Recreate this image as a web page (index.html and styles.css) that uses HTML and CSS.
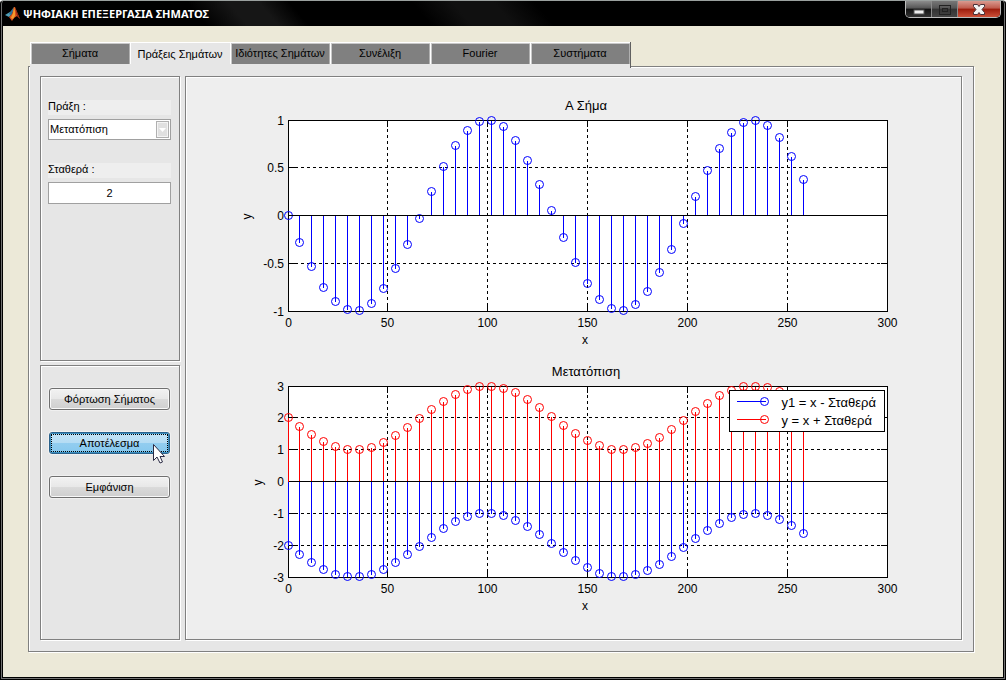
FILE: index.html
```html
<!DOCTYPE html>
<html lang="el">
<head>
<meta charset="utf-8">
<title>ΨΗΦΙΑΚΗ ΕΠΕΞΕΡΓΑΣΙΑ ΣΗΜΑΤΟΣ</title>
<link rel="stylesheet" href="styles.css">
</head>
<body>
<div class="window">
  <header class="titlebar">
    <svg class="logo" width="16" height="16" viewBox="0 0 16 16" aria-hidden="true">
      <path d="M0 9 L5 6 L7 8 L4 11 Z" fill="#4f9fb8"/>
      <path d="M5 6 L9 1 L8 6 L6 9 L4 8 Z" fill="#2c6f96"/>
      <path d="M9 1 L10 1 L12 6 L15 13 L12 10 L9 12 L7 15 L4 11 L7 8 Z" fill="#d9501c"/>
      <path d="M9 1 L10 5 L10 10 L8 13 L6 12 L8 7 Z" fill="#f59a2c"/>
      <path d="M10 2 L12 6 L15 13 L12 10 Z" fill="#8c2414"/>
    </svg>
    <h1 class="title">ΨΗΦΙΑΚΗ ΕΠΕΞΕΡΓΑΣΙΑ ΣΗΜΑΤΟΣ</h1>
    <div class="controls">
      <button class="control minimize" aria-label="Ελαχιστοποίηση"><svg width="12" height="14" viewBox="0 0 12 14"><rect x="1" y="8" width="10" height="4" fill="#eee" stroke="#555" stroke-width="1"/></svg></button>
      <button class="control maximize" aria-label="Μεγιστοποίηση" disabled><svg width="12" height="14" viewBox="0 0 12 14" fill="none" stroke="#222" stroke-width="1"><rect x="0.5" y="3.5" width="11" height="9"/><rect x="3.5" y="6.5" width="5" height="3"/></svg></button>
      <button class="control close" aria-label="Κλείσιμο"><svg width="14" height="14" viewBox="0 0 14 14"><path d="M1.500 2.500h4l1.500 2 1.500-2h4v2l-2.500 3 2.500 3v2h-4l-1.500-2-1.500 2h-4v-2l2.500-3-2.500-3z" fill="#f2f2f2" stroke="#4a3038"/></svg></button>
    </div>
  </header>
  <main class="client">
    <nav class="tabs" role="tablist">
      <button class="tab" role="tab">Σήματα</button>
      <button class="tab active" role="tab" aria-selected="true">Πράξεις Σημάτων</button>
      <button class="tab" role="tab">Ιδιότητες Σημάτων</button>
      <button class="tab" role="tab">Συνέλιξη</button>
      <button class="tab" role="tab">Fourier</button>
      <button class="tab" role="tab">Συστήματα</button>
    </nav>
    <section class="page etched">
      <aside class="sidebar">
        <form class="fields etched">
          <label class="label" for="operation">Πράξη :</label>
          <div class="combo">
            <select class="box" id="operation"><option>Μετατόπιση</option></select>
            <svg class="arrow" width="13" height="17" viewBox="0 0 13 17" aria-hidden="true"><rect x="0.500" y="0.500" width="12" height="16" fill="#e0e0e0" stroke="#b0b0b0"/><rect x="1.500" y="1.500" width="10" height="14" fill="none" stroke="#f4f4f4"/><path d="M3 7h7l-3.500 4z" fill="#fff"/></svg>
          </div>
          <label class="label" for="constant">Σταθερά :</label>
          <input class="box number" id="constant" type="text" value="2">
        </form>
        <div class="actions etched">
          <button class="action">Φόρτωση Σήματος</button>
          <button class="action hot">Αποτέλεσμα
            <svg class="cursor" width="12" height="20" viewBox="0 0 12 20" aria-hidden="true"><path d="M0.500 0.500v16l3.500-3.500 3 6 2.500-1-2.500-5.500h4.500z" fill="#fff" stroke="#2b2b44"/></svg>
          </button>
          <button class="action">Εμφάνιση</button>
        </div>
      </aside>
      <div class="charts etched">
        <svg class="chart" id="signal" viewBox="186 77 775 281" role="img" aria-label="Α Σήμα"></svg>
        <svg class="chart" id="shifted" viewBox="186 358 775 281" role="img" aria-label="Μετατόπιση"></svg>
      </div>
    </section>
  </main>
</div>
<script src="chart.js"></script>
</body>
</html>
```
FILE: styles.css
```css
* { box-sizing: border-box; }
body {
  margin: 0;
  font: 11px/13px "Liberation Sans", Arial, sans-serif;
  color: #000;
}
button, input, select { font: inherit; color: inherit; margin: 0; }

.window {
  min-height: 100vh;
  display: flex;
  flex-direction: column;
  background: #000;
  border: 1px solid #000;
  border-top-color: #9aa09e;
  border-radius: 4px 4px 0 0;
  box-shadow: inset 1px 0 #707070, inset -1px 0 #707070, inset 0 -1px #707070;
  padding: 0 2px 2px;
}
.titlebar {
  height: 25px;
  display: flex;
  align-items: center;
  gap: 2px;
  padding-left: 2px;
  background: linear-gradient(50deg, #000 0 20%, #161616 24% 27%, #000 30% 42%, #101010 46% 50%, #000 54%);
}
.title {
  flex: 1;
  margin: 0;
  font: bold 11px/13px "Noto Sans", sans-serif;
  color: #fff;
  white-space: nowrap;
}
.controls {
  align-self: flex-start;
  display: flex;
  height: 17px;
  margin-right: 2px;
  border: 1px solid #bdbdbd;
  border-top: 0;
  border-radius: 0 0 5px 5px;
  overflow: hidden;
}
.control {
  display: flex;
  align-items: center;
  justify-content: center;
  width: 26px;
  padding: 0;
  border: 0;
  border-right: 1px solid #8a8a8a;
  background: linear-gradient(#8c8c8c, #555 45%, #111 50%, #333);
}
.control.maximize { background: linear-gradient(#777, #555 45%, #333 50%, #444); }
.control.close {
  width: 42px;
  border-right: 0;
  background: linear-gradient(#d99a90, #bf5a4c 45%, #9c1c0c 50%, #cc5038);
}

.client {
  flex: 1;
  display: flex;
  flex-direction: column;
  padding: 16px 29px 25px 25px;
  background: #ece9d8;
}
.etched {
  border: 1px solid #808080;
  box-shadow: 1px 1px #fff, inset 1px 1px #fff;
}
.tabs {
  position: relative;
  z-index: 1;
  align-self: flex-start;
  display: flex;
  margin: 0 0 -2px 2px;
  padding-bottom: 4px;
  background: #e6e6e6;
  border-right: 1px solid #606060;
}
.tab {
  width: 100px;
  height: 22px;
  padding: 0;
  border: 0;
  background: #808080;
  box-shadow: inset 1px 1px #fff, inset 2px 2px #c8c8c8, inset -1px 0 #b0b0b0;
  white-space: nowrap;
}
.tab.active {
  padding-top: 2px;
  background: #e6e6e6;
  box-shadow: inset 1px 1px #fff;
}
.page {
  flex: 1;
  display: grid;
  grid-template-columns: 140px 1fr;
  gap: 5px;
  padding: 9px 11px 11px;
  background: #e6e6e6;
}
.sidebar {
  display: grid;
  grid-template-rows: 285fr 275fr;
  gap: 4px;
}
.fields {
  display: flex;
  flex-direction: column;
  padding: 23px 8px 0 7px;
}
.label {
  height: 15px;
  margin-bottom: 4px;
  background: #eee;
}
.combo {
  position: relative;
  display: flex;
  margin-bottom: 23px;
}
.box {
  width: 100%;
  height: 21px;
  padding: 0 1px;
  border: 1px solid #a0a0a0;
  border-radius: 0;
  background: #fff;
  appearance: none;
}
.number { height: 22px; text-align: center; }
.arrow {
  position: absolute;
  top: 2px;
  right: 2px;
  pointer-events: none;
}
.actions {
  display: flex;
  flex-direction: column;
  gap: 22px;
  padding: 22px 9px 0 8px;
}
.action {
  position: relative;
  height: 22px;
  padding: 0;
  border: 1px solid #707070;
  border-radius: 3px;
  background: linear-gradient(#f2f2f2, #e8e8e8 48%, #dadada 52%, #cfcfcf);
  box-shadow: 0 0 0 1px #f0f0f0, inset 0 0 0 1px #f8f8f8;
}
.action.hot {
  border-color: #2c628b;
  background: linear-gradient(#c5e4f6, #b4dcf4 48%, #92cdf0 52%, #86c8ee);
  box-shadow: 0 0 0 1px #f0f0f0, inset 0 0 0 1px #3c8fc0;
}
.action.hot::before {
  content: "";
  position: absolute;
  inset: 1px;
  border: 1px dotted #000;
}
.cursor {
  position: absolute;
  left: 103px;
  top: 11px;
}
.charts {
  display: flex;
  flex-direction: column;
  background: #eee;
}
.chart {
  display: block;
  width: 100%;
  height: auto;
  font: 12px "Liberation Sans", Arial, sans-serif;
}
.chart line, .chart rect { shape-rendering: crispEdges; }
.plot { fill: #fff; stroke: #000; }
.axis { stroke: #000; }
.grid { stroke: #000; stroke-dasharray: 3 3; }
.blue { stroke: #00f; fill: none; }
.red { stroke: #f00; fill: none; }
.middle { text-anchor: middle; }
.end { text-anchor: end; }
.caption { font-size: 13px; }
```
FILE: chart.js
```javascript
const NS = "http://www.w3.org/2000/svg";
const samples = Array.from({ length: 44 }, (_, i) => i * 6)
  .map(x => ({ x, y: -Math.sin(0.0472 * x) }));

function add(svg, tag, attrs, text) {
  const node = document.createElementNS(NS, tag);
  for (const key in attrs) node.setAttribute(key, attrs[key]);
  if (text !== undefined) node.textContent = text;
  svg.appendChild(node);
}

function line(svg, cls, x1, y1, x2, y2) {
  add(svg, "line", { class: cls, x1, y1, x2, y2 });
}

const px = x => Math.max(288, 287 + 2 * x) + 0.5;

function axes(svg, o) {
  const py = v => Math.floor(o.zero - v * o.unit) + 0.5;
  const top = py(o.max), bottom = py(-o.max);
  add(svg, "rect", { class: "plot", x: 288.5, y: top, width: 599, height: bottom - top });
  for (let x = 0; x <= 300; x += 50) {
    if (x > 0 && x < 300) {
      line(svg, "grid", px(x), bottom, px(x), top);
      line(svg, "axis", px(x), bottom, px(x), bottom - 6);
      line(svg, "axis", px(x), top, px(x), top + 6);
    }
    add(svg, "text", { class: "middle", x: px(x), y: bottom + 15 }, x);
  }
  for (let v = -o.max; v <= o.max; v += o.step) {
    if (Math.abs(v) < o.max && v !== 0) {
      line(svg, "grid", 288.5, py(v), 887.5, py(v));
      line(svg, "axis", 288.5, py(v), 295, py(v));
      line(svg, "axis", 881, py(v), 887.5, py(v));
    }
    add(svg, "text", { class: "end", x: 284, y: py(v) + 4 }, v);
  }
  for (const s of o.series) {
    for (const p of samples) {
      const y = py(s.value(p.y));
      line(svg, s.color, px(p.x), py(0), px(p.x), y);
      add(svg, "circle", { class: s.color, cx: px(p.x), cy: y, r: 4 });
    }
  }
  line(svg, "axis", 288.5, py(0), 887.5, py(0));
  add(svg, "text", { class: "middle caption", x: 586, y: top - 11 }, o.title);
  add(svg, "text", { class: "middle", x: 585, y: bottom + 32 }, "x");
  add(svg, "text", { class: "middle", transform: `translate(${o.labelX} ${py(0) + 1}) rotate(-90)` }, "y");
}

function legend(svg, x, y, rows) {
  add(svg, "rect", { class: "plot", x, y, width: 155, height: 41 });
  rows.forEach((row, i) => {
    const cy = y + 11 + i * 18;
    line(svg, row.color, x + 7, cy, x + 36, cy);
    add(svg, "circle", { class: row.color, cx: x + 35, cy, r: 4 });
    add(svg, "text", { class: "caption", x: x + 52, y: cy + 5 }, row.text);
  });
}

axes(document.getElementById("signal"), {
  title: "Α Σήμα", zero: 215.5, unit: 95.5, max: 1, step: 0.5, labelX: 251,
  series: [{ color: "blue", value: v => v }]
});

const shifted = document.getElementById("shifted");
axes(shifted, {
  title: "Μετατόπιση", zero: 481.55, unit: 31.82, max: 3, step: 1, labelX: 262,
  series: [
    { color: "blue", value: v => v - 2 },
    { color: "red", value: v => v + 2 }
  ]
});
legend(shifted, 729.5, 390.5, [
  { color: "blue", text: "y1 = x - Σταθερά" },
  { color: "red", text: "y = x + Σταθερά" }
]);
```
